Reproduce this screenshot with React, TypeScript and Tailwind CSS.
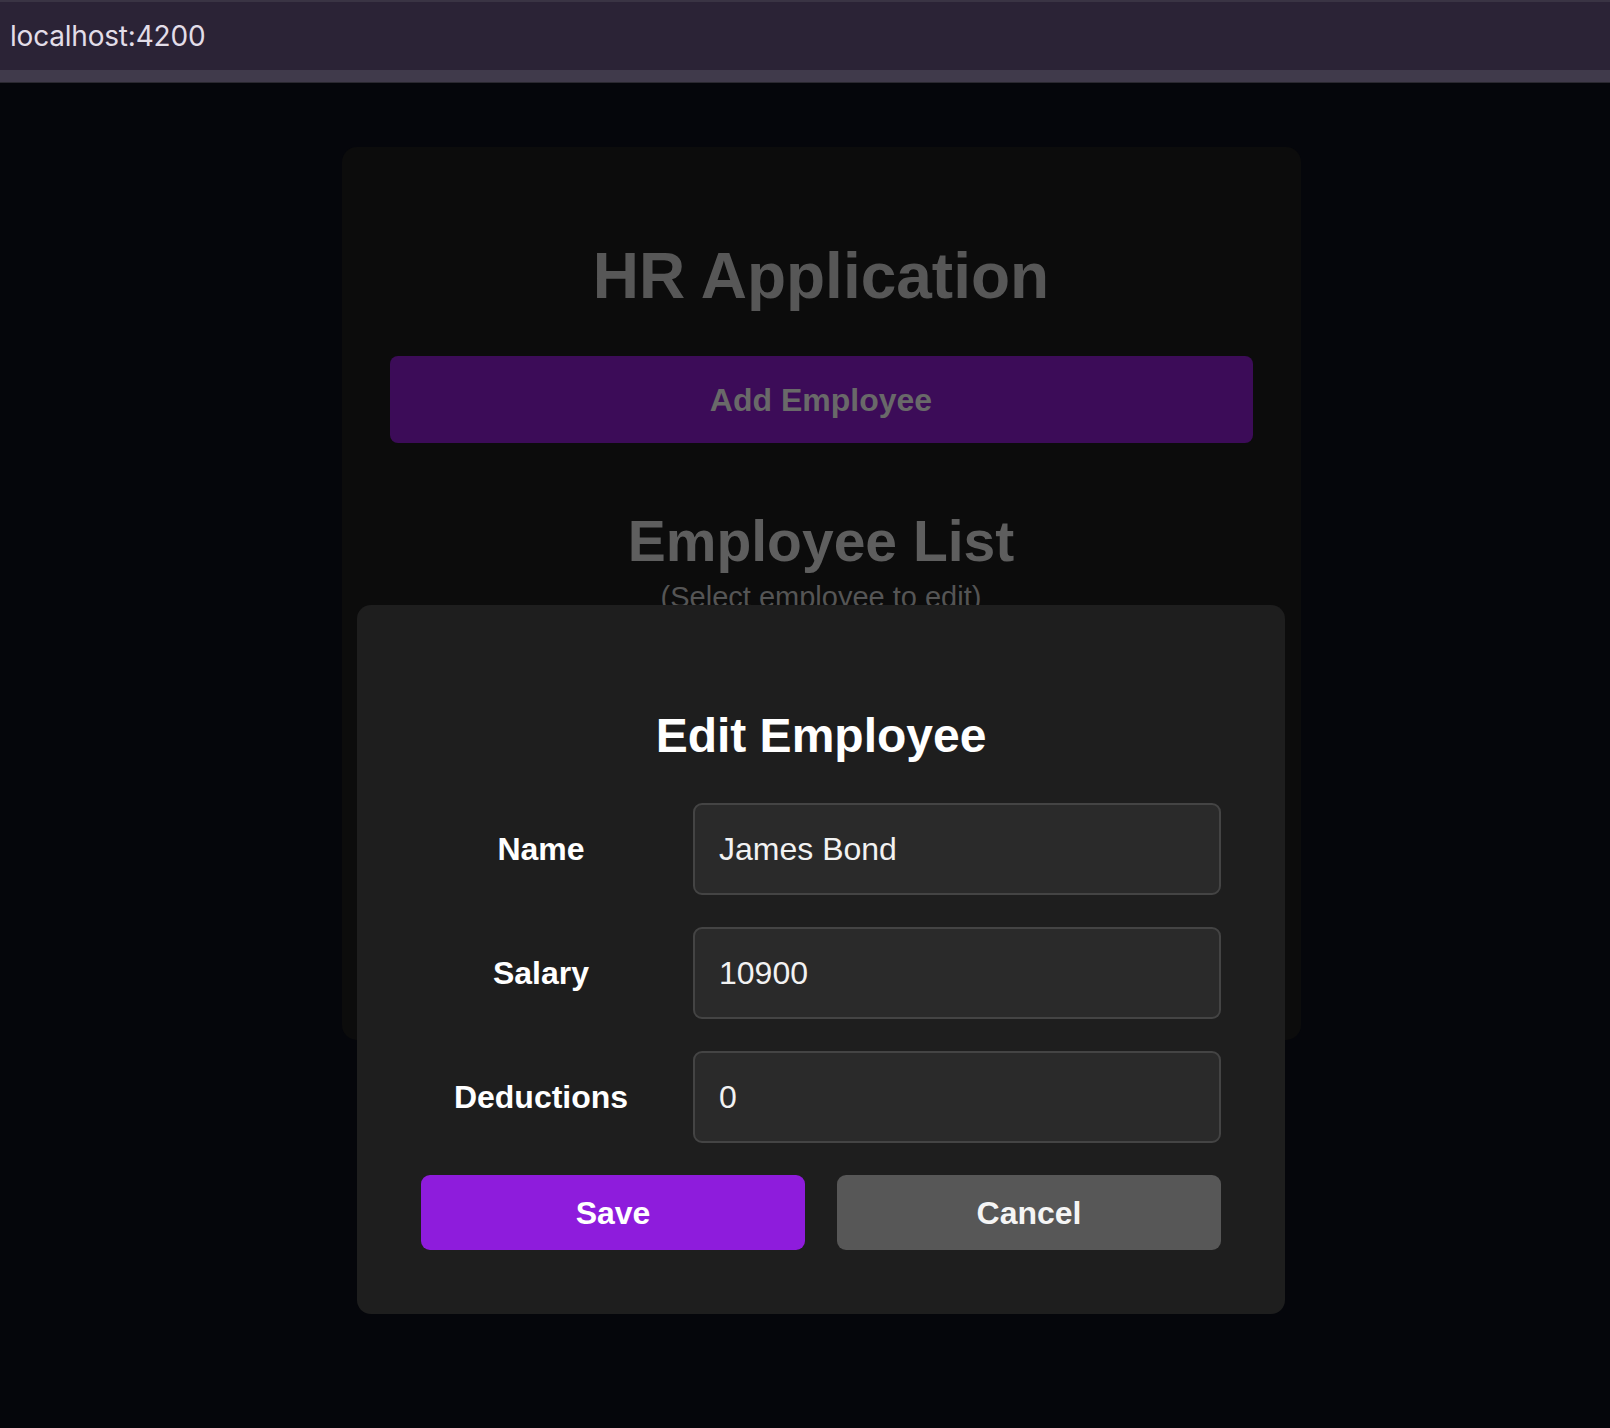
const fields = [
  { label: 'Name', value: 'James Bond' },
  { label: 'Salary', value: '10900' },
  { label: 'Deductions', value: '0' },
];

const App = () => {
  return (
    <div className="min-h-screen bg-[#05060b] font-['Liberation_Sans',Arial,sans-serif]">
      {/* browser chrome */}
      <div className="h-[83px] flex flex-col">
        <div className="h-[2px] bg-[#3a3444]"></div>
        <div className="h-[68px] bg-[#2b2336] flex items-center pl-[10px]">
          <span className="font-['Inter',sans-serif] text-[28px] text-[#e2dde8] tracking-[-0.2px]">localhost:4200</span>
        </div>
        <div className="h-[12px] bg-[#403a4b]"></div>
        <div className="h-[1px] bg-[#2a2830]"></div>
      </div>

      <div className="relative pt-16 pb-[388px] pl-[32px]">
        <div className="mx-auto w-[959px] h-[893px] rounded-[15px] bg-[#0c0c0c] px-12 pt-[97px]">
          <h1 className="text-[64px] leading-none font-bold text-[#575757] text-center">HR Application</h1>
          <button className="mt-12 w-full h-[87px] rounded-lg bg-[#3c0c58] text-[32px] font-bold text-[#696969]">
            Add Employee
          </button>
          <h2 className="mt-[70px] text-[57px] leading-none font-bold text-[#5e5e5e] text-center">Employee List</h2>
          <p className="mt-[13px] text-[29px] leading-none text-[#555555] text-center">(Select employee to edit)</p>
        </div>

        {/* edit dialog */}
        <div className="absolute top-[522px] left-[32px] right-0 mx-auto w-[928px] rounded-[14px] bg-[#1e1e1e] p-16">
          <h2 className="mt-[43px] mb-[43px] text-[48px] leading-none font-bold text-white text-center">Edit Employee</h2>
          <div className="flex flex-col gap-8">
            {fields.map((f) => (
              <div key={f.label} className="flex items-center gap-8">
                <label className="w-[240px] text-center text-[32px] font-bold text-white">{f.label}</label>
                <input
                  readOnly
                  value={f.value}
                  className="flex-1 h-[92px] rounded-[9px] border-2 border-[#444444] bg-[#2a2a2a] px-[24px] text-[32px] text-[#f2f2f2] outline-none"
                />
              </div>
            ))}
          </div>
          <div className="mt-8 flex gap-8">
            <button className="flex-1 h-[75px] rounded-[9px] bg-[#8e1cdc] text-[32px] font-bold text-white">Save</button>
            <button className="flex-1 h-[75px] rounded-[9px] bg-[#575757] text-[32px] font-bold text-[#f5f5f5]">Cancel</button>
          </div>
        </div>
      </div>
    </div>
  );
};

export default App;
